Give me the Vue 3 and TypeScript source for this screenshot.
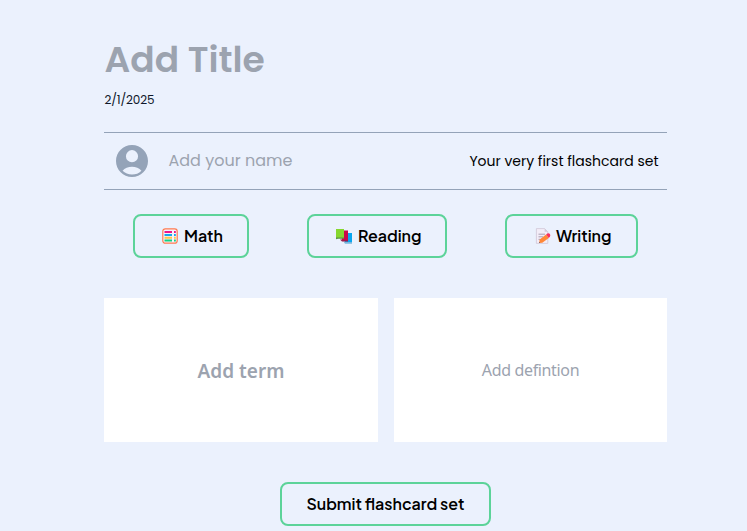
<script setup lang="ts">
interface Subject {
  id: 'math' | 'reading' | 'writing'
  label: string
}

const date = '2/1/2025'
const subjects: Subject[] = [
  { id: 'math', label: 'Math' },
  { id: 'reading', label: 'Reading' },
  { id: 'writing', label: 'Writing' },
]
</script>

<template>
  <main class="page">
    <h1 class="title"><span>Add Title</span></h1>
    <p class="date"><span>{{ date }}</span></p>

    <section class="author">
      <svg class="avatar" viewBox="2 2 20 20" aria-hidden="true">
        <path
          fill="#94a3b8"
          d="M12 2C6.48 2 2 6.48 2 12s4.48 10 10 10 10-4.48 10-10S17.52 2 12 2zm0 3.2a3.8 3.8 0 1 1 0 7.6 3.8 3.8 0 0 1 0-7.6zm0 15.3c-2.3 0-4.4-.9-5.9-2.4 1.3-1.5 3.6-2.5 5.9-2.5s4.6 1 5.9 2.5A8.4 8.4 0 0 1 12 20.5z"
        />
      </svg>
      <span class="name">Add your name</span>
      <span class="note">Your very first flashcard set</span>
    </section>

    <nav class="subjects">
      <button v-for="s in subjects" :key="s.id" class="btn subject" :class="s.id" type="button">
        <svg v-if="s.id === 'math'" class="icon" viewBox="0 0 16 16" aria-hidden="true">
          <rect x=".8" y=".8" width="14.4" height="14.4" rx="2.5" fill="#f6f3fb" stroke="#ff7a50" stroke-width="1.2" />
          <path stroke="#ee1689" stroke-width="2" d="M2.5 4H10M12 4H13.8" />
          <path stroke="#16a8ed" stroke-width="2" d="M2.5 7H10M12 7H13.8" />
          <path stroke="#ffc84a" stroke-width="2" d="M2.5 9.8H10M12 9.8H13.8" />
          <path stroke="#15cf83" stroke-width="2" d="M2.5 12.5H10M12 12.5H13.8" />
        </svg>
        <svg v-else-if="s.id === 'reading'" class="icon" viewBox="0 0 16 16" aria-hidden="true">
          <path fill="#78b7dd" d="M7.5 13.5H16v2.2H9z" />
          <path fill="#09a6f0" d="M8 5h8v9H9z" />
          <path fill="#91204e" d="M4 11.5h8v2H6z" />
          <path fill="#cb0849" d="M5 2.5h7v9.7H6z" />
          <path fill="#5a9641" d="M0 9h8v1.7H2l-2 .6z" />
          <path fill="#86d72f" d="M0 1h8v8.5H0z" />
        </svg>
        <svg v-else class="icon" viewBox="0 0 16 16" aria-hidden="true">
          <path fill="#f3edf8" stroke="#cfc5d5" stroke-width=".8" d="M1.4.6h8.2l3.2 3.2v11.6H1.4z" />
          <path fill="#d3c9da" d="M9.6.6v3.2h3.2z" />
          <path fill="none" stroke="#a99fb2" d="M3.5 6.2H10M3.5 8.8H8M3.5 11.3H5" />
          <path fill="#ff8838" d="m4.6 11.4 6.5-4.9 2.7 3.5-6.5 4.8-3.1.3z" />
          <path fill="#f92f60" d="m11.1 6.5 1.3-1q1.6-.6 2.5.6t0 2.7l-1.1 1.2z" />
          <path fill="#50445d" d="m4 15.1.3-1.2.9 1.1z" />
        </svg>
        <span class="label">{{ s.label }}</span>
      </button>
    </nav>

    <section class="cards">
      <div class="card term"><span>Add term</span></div>
      <div class="card definition"><span>Add defintion</span></div>
    </section>

    <button class="btn submit" type="button"><span class="label">Submit flashcard set</span></button>
  </main>
</template>

<style>
body {
  background: #ebf1fd;
}
</style>

<style scoped>
.page {
  box-sizing: border-box;
  display: flex;
  flex-direction: column;
  height: 531px;
  padding: 32px 80px 0 104px;
  overflow: hidden;
  background: #ebf1fd;
  font-family: Poppins, Inter, sans-serif;
  color: #000;
  white-space: nowrap;
}
.title {
  margin: 0;
  height: 56px;
  padding-left: 0.5px;
  font-size: 36px;
  line-height: 56px;
  font-weight: 600;
  color: #9ca3af;
}
.date {
  margin: 4px 0 0;
  height: 16px;
  padding-left: 0.5px;
  font-size: 12px;
  line-height: 16px;
  letter-spacing: -0.15px;
  color: #0f172a;
}
.author {
  box-sizing: border-box;
  display: flex;
  align-items: center;
  height: 58px;
  margin-top: 24px;
  padding: 0 8.5px 0 12px;
  border-top: 1px solid #94a3b8;
  border-bottom: 1px solid #94a3b8;
}
.avatar {
  width: 32px;
  height: 32px;
}
.name {
  margin-left: 20.5px;
  padding-bottom: 2px;
  font-size: 16px;
  color: #9ca3af;
}
.note {
  margin-left: auto;
  font-size: 14px;
}
.subjects {
  display: flex;
  justify-content: space-around;
  margin-top: 24px;
}
.btn {
  box-sizing: border-box;
  display: flex;
  align-items: center;
  justify-content: center;
  height: 44px;
  padding: 0;
  border: 2px solid #5cd399;
  border-radius: 8px;
  background: transparent;
  font: 560 16px "Plus Jakarta Sans", "DM Sans", Inter, sans-serif;
  color: #000;
}
.label {
  padding-bottom: 2px;
}
.subject {
  justify-content: flex-start;
  padding-left: 27px;
}
.math {
  width: 116px;
}
.reading {
  width: 140px;
}
.writing {
  width: 133px;
  padding-left: 28px;
}
.icon {
  flex: none;
  width: 16px;
  height: 16px;
  margin-right: 6px;
}
.writing .icon {
  margin-right: 5px;
}
.cards {
  display: grid;
  grid-template-columns: 274px 273px;
  gap: 16px;
  height: 144px;
  margin-top: 40px;
}
.card {
  display: flex;
  align-items: center;
  justify-content: center;
  background: #fff;
  font-family: "Noto Sans", sans-serif;
  color: #9ca3af;
}
.term {
  padding-top: 1px;
  font-size: 19px;
  font-weight: 600;
}
.definition {
  font-size: 16px;
  letter-spacing: -0.35px;
}
.submit {
  align-self: center;
  width: 211px;
  margin-top: 40px;
}
</style>
